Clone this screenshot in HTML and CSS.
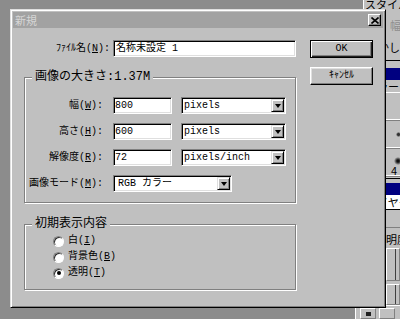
FILE: index.html
```html
<!DOCTYPE html>
<html lang="ja">
<head>
<meta charset="utf-8">
<title>新規</title>
<link rel="stylesheet" href="styles.css">
</head>
<body>
<div class="desk">
  <div class="pal opt">
    <div class="prow p1">スタイル</div>
    <div class="prow p2 dim">幅:</div>
    <div class="prow p3">ぼかし:</div>
  </div>
  <div class="pal brush">
    <div class="pbar"></div>
    <div class="ptabs"><span class="ptab">カラー</span></div>
    <div class="pgrid">
      <div class="pcell"></div>
      <div class="pcell"><span class="blot small"></span></div>
      <div class="pcell"><span class="blot"></span><span class="pn">4</span></div>
    </div>
  </div>
  <div class="pal layers">
    <div class="pbar"></div>
    <div class="ptabs"><span class="ptab on">レイヤー</span></div>
    <div class="prow mode"></div>
    <div class="prow opac">不透明度</div>
    <div class="lrow"><span class="lthumb"></span></div>
    <div class="lrow"><span class="lthumb"></span></div>
    <div class="pfoot"><span class="pbtn"><i></i></span><span class="pbtn"></span></div>
  </div>

  <div class="dialog">
    <div class="titlebar">
      <span class="title">新規</span>
      <span class="close"><svg width="8" height="7" viewBox="0 0 8 7"><path d="M0.5 0.5 L7.5 6.5 M7.5 0.5 L0.5 6.5" stroke="#000" stroke-width="1.6" fill="none"/></svg></span>
    </div>
    <div class="body">
      <div class="main">
        <div class="namerow">
          <span class="nlbl">ﾌｧｲﾙ名(<u>N</u>):</span>
          <div class="field name">名称未設定 1</div>
        </div>
        <fieldset class="group size">
          <legend>画像の大きさ:1.37M</legend>
          <div class="row">
            <span class="lbl">幅(<u>W</u>):</span>
            <div class="field num">800</div>
            <div class="field select unit"><span class="val">pixels</span><span class="arrow"><i></i></span></div>
          </div>
          <div class="row">
            <span class="lbl">高さ(<u>H</u>):</span>
            <div class="field num">600</div>
            <div class="field select unit"><span class="val">pixels</span><span class="arrow"><i></i></span></div>
          </div>
          <div class="row">
            <span class="lbl">解像度(<u>R</u>):</span>
            <div class="field num">72</div>
            <div class="field select unit"><span class="val">pixels/inch</span><span class="arrow"><i></i></span></div>
          </div>
          <div class="row">
            <span class="lbl">画像モード(<u>M</u>):</span>
            <div class="field select mode"><span class="val">RGB カラー</span><span class="arrow"><i></i></span></div>
          </div>
        </fieldset>
        <fieldset class="group contents">
          <legend>初期表示内容</legend>
          <div class="radio"><span class="dot"></span>白(<u>I</u>)</div>
          <div class="radio"><span class="dot"></span>背景色(<u>B</u>)</div>
          <div class="radio"><span class="dot on"></span>透明(<u>T</u>)</div>
        </fieldset>
      </div>
      <div class="buttons">
        <div class="btn default">OK</div>
        <div class="btn">ｷｬﾝｾﾙ</div>
      </div>
    </div>
  </div>
</div>
</body>
</html>
```

FILE: styles.css
```css
html, body {
  margin: 0;
  padding: 0;
}
body {
  width: 400px;
  height: 319px;
  overflow: hidden;
  background: #8a8a8a;
}
.desk {
  position: relative;
  width: 400px;
  height: 319px;
  overflow: hidden;
  background: #8c8c8c;
  font: 10px/12px "Liberation Mono", "Noto Sans CJK JP", monospace;
  color: #000;
}

/* background palettes (behind the dialog) */
.pal {
  position: absolute;
  background: #c0c0c0;
  box-shadow: inset 1px 0 #fff;
  display: flex;
  flex-direction: column;
  font-family: "Noto Sans CJK JP", sans-serif;
  font-size: 11px;
  line-height: 11px;
  white-space: nowrap;
  overflow: hidden;
}
.pal.opt {
  left: 363px;
  top: 0;
  width: 37px;
  height: 61px;
  box-sizing: border-box;
  border-bottom: 1px solid #000;
}
.prow { height: 11px; }
.opt .p1 { padding-left: 2px; margin-top: -1px; }
.opt .p2 { padding-left: 27px; margin-top: 10px; color: #8e8e8e; }
.opt .p3 { padding-left: 4px; margin-top: 11px; }

.pal.brush {
  left: 363px;
  top: 61px;
  width: 37px;
  height: 118px;
  box-sizing: border-box;
  padding-top: 7px;
  border-bottom: 1px solid #000;
}
.pbar { height: 12px; background: #000080; flex: none; }
.ptabs {
  height: 12px;
  flex: none;
  border-bottom: 1px solid #fff;
  padding-left: 1px;
}
.ptab { display: inline-block; padding: 0 2px; height: 12px; line-height: 12px; }
.pgrid {
  display: flex;
  flex-direction: column;
  padding-left: 23px;
}
.pcell {
  height: 27px;
  border-bottom: 1px solid #808080;
  box-shadow: inset 0 -1px #fff;
  display: flex;
  flex-direction: column;
  align-items: flex-start;
}
.blot {
  width: 8px;
  height: 9px;
  margin: 8px 0 0 8px;
  border-radius: 50%;
  background: radial-gradient(#111 20%, #c0c0c0 72%);
}
.blot.small { width: 5px; height: 5px; margin: 11px 0 0 10px; background: radial-gradient(#333 30%, #c0c0c0 75%); }
.pn { padding-left: 5px; margin-top: 0; }

.pal.layers {
  left: 355px;
  top: 179px;
  width: 45px;
  height: 140px;
  padding-top: 4px;
  box-sizing: border-box;
}
.layers .ptabs { height: 14px; padding-left: 9px; border-bottom: 1px solid #000; }
.layers .ptab.on { background: #fff; height: 14px; line-height: 14px; }
.layers .mode { height: 15px; border-bottom: 1px solid #808080; margin-top: 3px; }
.layers .opac { padding-left: 9px; margin-top: 6px; height: 12px; }
.lrow {
  height: 35px;
  margin: 3px 0 0 31px;
  border: 1px solid;
  border-color: #fff #808080 #808080 #fff;
  position: relative;
}
.lrow + .lrow { height: 21px; }
.lthumb {
  position: absolute;
  right: 1px;
  top: 0;
  bottom: 0;
  border-left: 1px solid #404040;
  width: 2px;
}
.pfoot {
  margin-top: auto;
  height: 11px;
  flex: none;
  border-top: 1px solid #fff;
  display: flex;
  gap: 3px;
  padding: 2px 0 0 5px;
}
.pbtn {
  width: 14px;
  height: 9px;
  border: 1px solid;
  border-color: #fff #808080 #808080 #fff;
  display: flex;
  justify-content: center;
  align-items: center;
}
.pbtn i { width: 5px; height: 4px; background: #222; }

/* dialog window */
.dialog {
  position: absolute;
  left: 10px;
  top: 9px;
  width: 376px;
  height: 299px;
  box-sizing: border-box;
  background: #c0c0c0;
  border: 1px solid;
  border-color: #dfdfdf #000 #000 #dfdfdf;
  box-shadow: inset 1px 1px #fff, inset -1px -1px #808080;
  padding: 2px;
  display: flex;
  flex-direction: column;
}
.titlebar {
  height: 16px;
  flex: none;
  background: #a2a2a2;
  display: flex;
  align-items: center;
  justify-content: space-between;
  padding: 0 2px;
}
.title {
  color: #d6d6d6;
  font-family: "Noto Sans CJK JP", sans-serif;
  font-size: 11px;
  line-height: 12px;
}
.close {
  width: 13px;
  height: 12px;
  box-sizing: border-box;
  background: #c0c0c0;
  border: 1px solid;
  border-color: #fff #000 #000 #fff;
  box-shadow: inset -1px -1px #808080;
  display: flex;
  align-items: center;
  justify-content: center;
}
.close svg { display: block; }

.body {
  display: flex;
  gap: 14px;
  padding: 12px 0 0 11px;
}
.main {
  width: 272px;
  display: flex;
  flex-direction: column;
}
.namerow {
  display: flex;
  justify-content: flex-end;
  align-items: center;
  height: 17px;
}
.nlbl { margin-right: 3px; white-space: nowrap; }

.field {
  box-sizing: border-box;
  height: 17px;
  background: #fff;
  border: 1px solid;
  border-color: #808080 #fff #fff #808080;
  box-shadow: inset 1px 1px #000, inset -1px -1px #dfdfdf;
  padding: 0 0 0 2px;
  line-height: 15px;
  white-space: nowrap;
}
.field.name { width: 183px; }

.group {
  margin: 14px 0 0;
  padding: 14px 0 10px 0;
  border: 1px solid #808080;
  box-shadow: inset 1px 1px #fff, 1px 1px #fff;
  min-width: 0;
}
.group legend {
  font-size: 12px;
  line-height: 12px;
  margin-left: 7px;
  padding: 0 3px;
  background: #c0c0c0;
  white-space: nowrap;
}
.group.contents {
  margin-top: 15px;
  padding: 3px 0 8px 0;
}
.row {
  display: flex;
  align-items: center;
  height: 17px;
  margin-bottom: 9px;
}
.row:last-child { margin-bottom: 0; }
.lbl {
  width: 78px;
  text-align: right;
  white-space: nowrap;
}
.field.num { width: 59px; margin-left: 10px; padding-left: 1px; }
.select {
  display: flex;
  align-items: center;
  padding-right: 1px;
}
.select .val { flex: 1; }
.field.unit { width: 105px; margin-left: 9px; }
.field.mode { width: 119px; margin-left: 10px; padding-left: 4px; }
.arrow {
  width: 13px;
  height: 13px;
  box-sizing: border-box;
  background: #c0c0c0;
  border: 1px solid;
  border-color: #dfdfdf #000 #000 #dfdfdf;
  box-shadow: inset 1px 1px #fff, inset -1px -1px #808080;
  display: flex;
  align-items: center;
  justify-content: center;
}
.arrow i {
  width: 0;
  height: 0;
  border-left: 3.5px solid transparent;
  border-right: 3.5px solid transparent;
  border-top: 4px solid #000;
  margin-top: 1px;
}

.radio {
  display: flex;
  align-items: center;
  height: 16px;
  padding-left: 28px;
  white-space: nowrap;
}
.dot {
  width: 11px;
  height: 11px;
  box-sizing: border-box;
  border-radius: 50%;
  background: #fff;
  border: 1px solid;
  border-color: #808080 #fff #fff #808080;
  box-shadow: inset 1px 1px #303030;
  margin-right: 4px;
  display: flex;
  align-items: center;
  justify-content: center;
}
.dot.on::after {
  content: "";
  width: 4px;
  height: 4px;
  border-radius: 50%;
  background: #000;
}

.buttons {
  width: 63px;
  display: flex;
  flex-direction: column;
  gap: 9px;
}
.btn {
  height: 18px;
  box-sizing: border-box;
  background: #c0c0c0;
  border: 1px solid;
  border-color: #fff #000 #000 #fff;
  box-shadow: inset -1px -1px #808080, inset 1px 1px #dfdfdf;
  display: flex;
  align-items: center;
  justify-content: center;
  line-height: 12px;
}
.btn.default {
  border-color: #000;
  box-shadow: inset 1px 1px #fff, inset -1px -1px #202020, inset -2px -2px #808080;
}
```
